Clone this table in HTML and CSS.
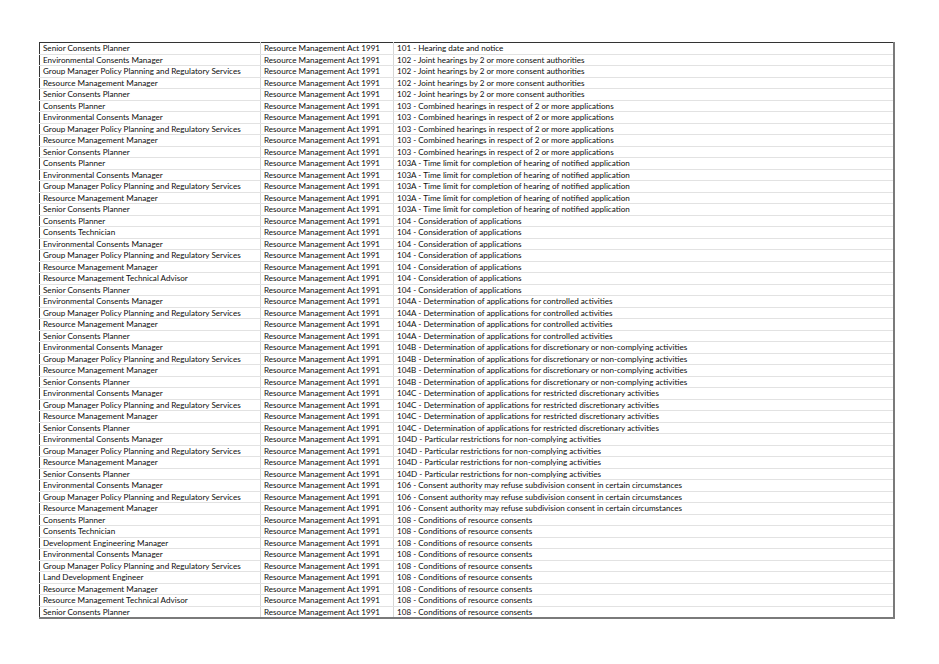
FILE: index.html
```html
<!DOCTYPE html>
<html>
<head>
<meta charset="utf-8">
<link rel="stylesheet" href="styles.css">
</head>
<body>
<div class="sheet">
<table class="grid">
<colgroup><col class="c1"><col class="c2"><col class="c3"></colgroup>
<tbody>
<tr><td>Senior Consents Planner</td><td>Resource Management Act 1991</td><td>101 - Hearing date and notice</td></tr>
<tr><td>Environmental Consents Manager</td><td>Resource Management Act 1991</td><td>102 - Joint hearings by 2 or more consent authorities</td></tr>
<tr><td>Group Manager Policy Planning and Regulatory Services</td><td>Resource Management Act 1991</td><td>102 - Joint hearings by 2 or more consent authorities</td></tr>
<tr><td>Resource Management Manager</td><td>Resource Management Act 1991</td><td>102 - Joint hearings by 2 or more consent authorities</td></tr>
<tr><td>Senior Consents Planner</td><td>Resource Management Act 1991</td><td>102 - Joint hearings by 2 or more consent authorities</td></tr>
<tr><td>Consents Planner</td><td>Resource Management Act 1991</td><td>103 - Combined hearings in respect of 2 or more applications</td></tr>
<tr><td>Environmental Consents Manager</td><td>Resource Management Act 1991</td><td>103 - Combined hearings in respect of 2 or more applications</td></tr>
<tr><td>Group Manager Policy Planning and Regulatory Services</td><td>Resource Management Act 1991</td><td>103 - Combined hearings in respect of 2 or more applications</td></tr>
<tr><td>Resource Management Manager</td><td>Resource Management Act 1991</td><td>103 - Combined hearings in respect of 2 or more applications</td></tr>
<tr><td>Senior Consents Planner</td><td>Resource Management Act 1991</td><td>103 - Combined hearings in respect of 2 or more applications</td></tr>
<tr><td>Consents Planner</td><td>Resource Management Act 1991</td><td>103A - Time limit for completion of hearing of notified application</td></tr>
<tr><td>Environmental Consents Manager</td><td>Resource Management Act 1991</td><td>103A - Time limit for completion of hearing of notified application</td></tr>
<tr><td>Group Manager Policy Planning and Regulatory Services</td><td>Resource Management Act 1991</td><td>103A - Time limit for completion of hearing of notified application</td></tr>
<tr><td>Resource Management Manager</td><td>Resource Management Act 1991</td><td>103A - Time limit for completion of hearing of notified application</td></tr>
<tr><td>Senior Consents Planner</td><td>Resource Management Act 1991</td><td>103A - Time limit for completion of hearing of notified application</td></tr>
<tr><td>Consents Planner</td><td>Resource Management Act 1991</td><td>104 - Consideration of applications</td></tr>
<tr><td>Consents Technician</td><td>Resource Management Act 1991</td><td>104 - Consideration of applications</td></tr>
<tr><td>Environmental Consents Manager</td><td>Resource Management Act 1991</td><td>104 - Consideration of applications</td></tr>
<tr><td>Group Manager Policy Planning and Regulatory Services</td><td>Resource Management Act 1991</td><td>104 - Consideration of applications</td></tr>
<tr><td>Resource Management Manager</td><td>Resource Management Act 1991</td><td>104 - Consideration of applications</td></tr>
<tr><td>Resource Management Technical Advisor</td><td>Resource Management Act 1991</td><td>104 - Consideration of applications</td></tr>
<tr><td>Senior Consents Planner</td><td>Resource Management Act 1991</td><td>104 - Consideration of applications</td></tr>
<tr><td>Environmental Consents Manager</td><td>Resource Management Act 1991</td><td>104A - Determination of applications for controlled activities</td></tr>
<tr><td>Group Manager Policy Planning and Regulatory Services</td><td>Resource Management Act 1991</td><td>104A - Determination of applications for controlled activities</td></tr>
<tr><td>Resource Management Manager</td><td>Resource Management Act 1991</td><td>104A - Determination of applications for controlled activities</td></tr>
<tr><td>Senior Consents Planner</td><td>Resource Management Act 1991</td><td>104A - Determination of applications for controlled activities</td></tr>
<tr><td>Environmental Consents Manager</td><td>Resource Management Act 1991</td><td>104B - Determination of applications for discretionary or non-complying activities</td></tr>
<tr><td>Group Manager Policy Planning and Regulatory Services</td><td>Resource Management Act 1991</td><td>104B - Determination of applications for discretionary or non-complying activities</td></tr>
<tr><td>Resource Management Manager</td><td>Resource Management Act 1991</td><td>104B - Determination of applications for discretionary or non-complying activities</td></tr>
<tr><td>Senior Consents Planner</td><td>Resource Management Act 1991</td><td>104B - Determination of applications for discretionary or non-complying activities</td></tr>
<tr><td>Environmental Consents Manager</td><td>Resource Management Act 1991</td><td>104C - Determination of applications for restricted discretionary activities</td></tr>
<tr><td>Group Manager Policy Planning and Regulatory Services</td><td>Resource Management Act 1991</td><td>104C - Determination of applications for restricted discretionary activities</td></tr>
<tr><td>Resource Management Manager</td><td>Resource Management Act 1991</td><td>104C - Determination of applications for restricted discretionary activities</td></tr>
<tr><td>Senior Consents Planner</td><td>Resource Management Act 1991</td><td>104C - Determination of applications for restricted discretionary activities</td></tr>
<tr><td>Environmental Consents Manager</td><td>Resource Management Act 1991</td><td>104D - Particular restrictions for non-complying activities</td></tr>
<tr><td>Group Manager Policy Planning and Regulatory Services</td><td>Resource Management Act 1991</td><td>104D - Particular restrictions for non-complying activities</td></tr>
<tr><td>Resource Management Manager</td><td>Resource Management Act 1991</td><td>104D - Particular restrictions for non-complying activities</td></tr>
<tr><td>Senior Consents Planner</td><td>Resource Management Act 1991</td><td>104D - Particular restrictions for non-complying activities</td></tr>
<tr><td>Environmental Consents Manager</td><td>Resource Management Act 1991</td><td>106 - Consent authority may refuse subdivision consent in certain circumstances</td></tr>
<tr><td>Group Manager Policy Planning and Regulatory Services</td><td>Resource Management Act 1991</td><td>106 - Consent authority may refuse subdivision consent in certain circumstances</td></tr>
<tr><td>Resource Management Manager</td><td>Resource Management Act 1991</td><td>106 - Consent authority may refuse subdivision consent in certain circumstances</td></tr>
<tr><td>Consents Planner</td><td>Resource Management Act 1991</td><td>108 - Conditions of resource consents</td></tr>
<tr><td>Consents Technician</td><td>Resource Management Act 1991</td><td>108 - Conditions of resource consents</td></tr>
<tr><td>Development Engineering Manager</td><td>Resource Management Act 1991</td><td>108 - Conditions of resource consents</td></tr>
<tr><td>Environmental Consents Manager</td><td>Resource Management Act 1991</td><td>108 - Conditions of resource consents</td></tr>
<tr><td>Group Manager Policy Planning and Regulatory Services</td><td>Resource Management Act 1991</td><td>108 - Conditions of resource consents</td></tr>
<tr><td>Land Development Engineer</td><td>Resource Management Act 1991</td><td>108 - Conditions of resource consents</td></tr>
<tr><td>Resource Management Manager</td><td>Resource Management Act 1991</td><td>108 - Conditions of resource consents</td></tr>
<tr><td>Resource Management Technical Advisor</td><td>Resource Management Act 1991</td><td>108 - Conditions of resource consents</td></tr>
<tr><td>Senior Consents Planner</td><td>Resource Management Act 1991</td><td>108 - Conditions of resource consents</td></tr>
</tbody>
</table>
</div>
</body>
</html>
```
FILE: styles.css
```css
html, body {
  margin: 0;
  padding: 0;
  background: #ffffff;
}
.sheet {
  padding: 42px 0 0 39px;
}
.grid {
  border-collapse: collapse;
  table-layout: fixed;
  width: 856px;
  font-family: Lato, "Liberation Sans", Arial, sans-serif;
  font-size: 8.1px;
  color: #0d0d0d;
  border-top: 1px solid #333333;
  border-left: 1px solid #333333;
  border-right: 2px solid #7a7a7a;
  border-bottom: 2px solid #7a7a7a;
}
.c1 { width: 221px; }
.c2 { width: 133px; }
.c3 { width: auto; }
.grid td {
  height: 10.5px;
  padding: 0 3px;
  line-height: 10px;
  white-space: nowrap;
  overflow: hidden;
  border-bottom: 1px solid #e2e2e2;
  vertical-align: middle;
}
.grid td + td {
  border-left: 1px solid #d6d6d6;
}
```
